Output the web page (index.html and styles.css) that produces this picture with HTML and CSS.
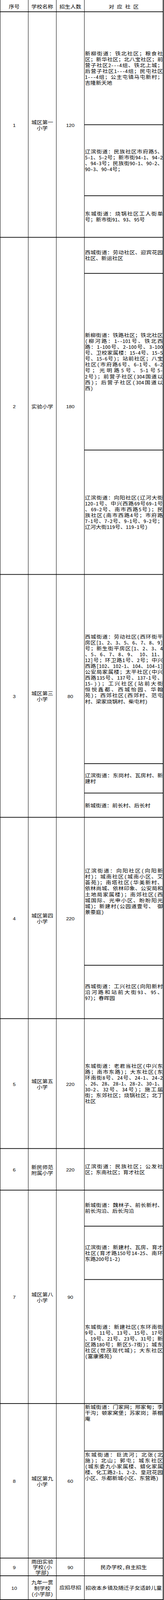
FILE: index.html
```html
<!DOCTYPE html>
<html lang="zh-CN">
<head>
<meta charset="utf-8">
<title>招生对应社区</title>
<link rel="stylesheet" href="styles.css">
</head>
<body>
<div class="page">
<div class="sheet">
  <div class="row head">
    <div class="c">序号</div>
    <div class="c">学校名称</div>
    <div class="c">招生人数</div>
    <div class="c">对　应　社　区</div>
  </div>

  <div class="row">
    <div class="c num">1</div>
    <div class="c name">城区第一小学</div>
    <div class="c num">120</div>
    <div class="areas">
      <div class="area h324"><p class="t"><span>新柳街道：铁北社区；粮食社</span><span>区；新华社区；北八宝社区；前</span><span>营子社区2---4组、铁北上城；</span><span>后营子社区1---4组；民屯社区</span><span>1---4组；公主屯镇马屯新村；</span><span>吉隆新天地</span></p></div>
      <div class="area h203"><p class="t"><span>辽滨街道：民族社区市府路5、</span><span>5-1、5-2号；新市街94-1、94-2</span><span>、94-3号；民族街90-1、90-2、</span><span>90-3、90-4号；</span></p></div>
      <div class="area h118"><p class="t"><span>东城街道：烧锅社区工人街单</span><span>号；新市街91、93、95号</span></p></div>
    </div>
  </div>

  <div class="row">
    <div class="c num">2</div>
    <div class="c name">实验小学</div>
    <div class="c num">180</div>
    <div class="areas">
      <div class="area h102"><p class="t"><span>西城街道：劳动社区、迎宾花园</span><span>社区、新运社区</span></p></div>
      <div class="area h508"><p class="t"><span>新柳街道：铁路社区；铁北社区</span><span>（柳河路：1--101号、铁北西</span><span>路：1-100号、2-100号、3-100</span><span>号、卫校家属楼：15-4号、15-5</span><span>号、15-6号）；站前社区；八宝</span><span>社区（市府路6号、6-1号、6-2</span><span>号；光明路5号、5-1号5-</span><span>2号）；前营子社区（304国道以</span><span>西）；后营子社区（304国道以</span><span>西）</span></p></div>
      <div class="area h357"><p class="t"><span>辽滨街道：向阳社区（辽河大街</span><span>120-1号、中兴西路69号69-1号</span><span>、69-2号、南市西路5号）；民</span><span>族社区（南市西路4号；市府路</span><span>7-1号、7-2号、9-1号、9-2号；</span><span>辽河大街119号、119-1号）</span></p></div>
    </div>
  </div>

  <div class="row">
    <div class="c num">3</div>
    <div class="c name">城区第三小学</div>
    <div class="c num">80</div>
    <div class="areas">
      <div class="area h544"><p class="t"><span>西城街道：劳动社区（西环街平</span><span>房区[1、2、3、5、6、7、8、9]</span><span>号；新生街平房区[1、2、3、4</span><span>、5、6、7、8、9、　10、11、</span><span>12]号；环卫路1号、2号；中兴</span><span>西路[102、102-1、104、104-1]</span><span>公安局家属楼；太平社区（中兴</span><span>西路135号、137号、137-1号、</span><span>15-））；工兴社区（站前大街</span><span>恒悦鑫都、西城怡园、华翰</span><span>苑）；西郊社区（西郊村、范屯</span><span>村、梁家烧锅村、柴屯村）</span></p></div>
      <div class="area h83"><p class="t"><span>辽滨街道：东岗村、瓦房村、新</span><span>建村</span></p></div>
      <div class="area h68"><p class="t"><span>新城街道：前长村、后长村</span></p></div>
    </div>
  </div>

  <div class="row">
    <div class="c num">4</div>
    <div class="c name">城区第四小学</div>
    <div class="c num">220</div>
    <div class="areas">
      <div class="area h425"><p class="t"><span>辽滨街道：向阳社区（向阳新</span><span>村）；城南社区(城南小区、艾</span><span>荟苑)；南塔社区（华美新村、</span><span>依林尚城、依林印象、公安局和</span><span>土地局家属楼）；南郊社区(西</span><span>城国际、光申小区、盼盼阳光</span><span>城)；新建村(公园道壹号、　御</span><span>景豪庭)</span></p></div>
      <div class="area h152"><p class="t"><span>西城街道：工兴社区（向阳新村</span><span>沿河路和站前大街93、95、</span><span>97）；春晖园</span></p></div>
    </div>
  </div>

  <div class="row">
    <div class="c num">5</div>
    <div class="c name">城区第五小学</div>
    <div class="c num">220</div>
    <div class="areas">
      <div class="area h373"><p class="t"><span>东城街道：老君当社区（中兴东</span><span>路；南市东路）；大东社区（东</span><span>环南街8号、24号、24-1、24-2</span><span>、26、28、28-1、28-2、30-1、</span><span>30-2、32号、34号）；施工届</span><span>街；东郊社区；烧锅社区；北丁</span><span>社区</span></p></div>
    </div>
  </div>

  <div class="row">
    <div class="c num">6</div>
    <div class="c name">新民师范附属小学</div>
    <div class="c num">220</div>
    <div class="areas">
      <div class="area h118"><p class="t"><span>辽滨街道：民族社区；公发社</span><span>区；东南社区；育才社区</span></p></div>
    </div>
  </div>

  <div class="row">
    <div class="c num">7</div>
    <div class="c name">城区第八小学</div>
    <div class="c num">90</div>
    <div class="areas">
      <div class="area h102"><p class="t"><span>新城街道：魏林子、前长新村、</span><span>前长沟沿、后长沟沿</span></p></div>
      <div class="area h152"><p class="t"><span>辽滨街道：新建村、瓦房、育才</span><span>社区（育才路150号14-25、南环</span><span>东路200号1-2）</span></p></div>
      <div class="area h356"><p class="t"><span>东城街道：新建社区（东环南街</span><span>9号、11号、13号、15号、17号</span><span>、19号、21号、23号、31号；新</span><span>区路180号；新区5-7街）；城东</span><span>社区（世茂现代城）；大东社区</span><span>（富康雅苑）</span></p></div>
    </div>
  </div>

  <div class="row">
    <div class="c num">8</div>
    <div class="c name">城区第九小学</div>
    <div class="c num">60</div>
    <div class="areas">
      <div class="area top h135"><p class="t"><span>新城街道：门家网；邢家甸；李</span><span>干沟；顿家窝堡；苏家岗；茶棚</span><span>庵</span></p></div>
      <div class="area top h307"><p class="t"><span>东城街道：巨流河；北张（北</span><span>施）；北山；郭屯；城东社区</span><span>（城东委九小家属楼、蜡化家属</span><span>楼、化工路2-1、2-2、皇冠花园</span><span>小区、乐都新城小区、东营路）</span></p></div>
    </div>
  </div>

  <div class="row">
    <div class="c num">9</div>
    <div class="c name tight">雨田实验学校（小学部）</div>
    <div class="c num">90</div>
    <div class="areas">
      <div class="area mid h49">民办学校，自主招生</div>
    </div>
  </div>

  <div class="row">
    <div class="c num">10</div>
    <div class="c name">九年一贯制学校（小学部）</div>
    <div class="c">应招尽招</div>
    <div class="areas">
      <div class="area mid h67">招收本乡镇及随迁子女适龄儿童</div>
    </div>
  </div>
</div>
</div>
</body>
</html>
```

FILE: styles.css
```css
html, body {
  margin: 0;
  padding: 0;
  background: #fff;
}

body {
  font-family: "Noto Sans CJK SC", "Noto Sans", sans-serif;
  font-size: 14px;
  line-height: 17px;
  color: #000;
  font-feature-settings: "hwid" 1;
  text-spacing-trim: space-all;
  text-autospace: no-autospace;
}

/* The capture window is 4096px tall and is stretched to 4618px,
   so the 4618px-tall sheet is drawn compressed into 4096px. */
.page {
  height: 4096px;
  overflow: hidden;
}

.sheet {
  width: 420px;
  box-sizing: border-box;
  padding: 0 2px 2px 1px;
  background: #000;
  display: flex;
  flex-direction: column;
  row-gap: 2px;
  transform: scaleY(0.886964);
  transform-origin: 0 0;
}

.row {
  display: grid;
  grid-template-columns: 71px 71px 71px 201px;
  column-gap: 1px;
}

.c {
  background: #fff;
  display: flex;
  align-items: center;
  justify-content: center;
  text-align: center;
  overflow: hidden;
  contain: size;
  box-sizing: border-box;
}

.head {
  height: 33px;
}

.head .c {
  padding-top: 5px;
}

.num {
  font-family: "Liberation Sans", Arial, sans-serif;
  font-size: 13px;
  font-feature-settings: normal;
  padding-top: 3px;
}

.name {
  padding: 3px 5px 0;
}

.name.tight {
  padding-top: 0;
  line-height: 16px;
}

.areas {
  display: flex;
  flex-direction: column;
  row-gap: 2px;
}

.area {
  background: #fff;
  display: flex;
  align-items: center;
  overflow: hidden;
  flex: none;
}

.area.top {
  align-items: flex-start;
  padding-top: 1px;
  box-sizing: border-box;
}

.area.mid {
  justify-content: center;
  text-align: center;
  padding-top: 2px;
  box-sizing: border-box;
}

.t {
  margin: 0;
  width: 100%;
  padding-left: 1px;
  box-sizing: border-box;
}

.t span {
  display: block;
  text-align: justify;
  text-align-last: justify;
}

.t span:last-child {
  text-align: left;
  text-align-last: auto;
}

.h49 { height: 49px; }
.h67 { height: 67px; }
.h68 { height: 68px; }
.h83 { height: 83px; }
.h102 { height: 102px; }
.h118 { height: 118px; }
.h135 { height: 135px; }
.h152 { height: 152px; }
.h203 { height: 203px; }
.h307 { height: 307px; }
.h324 { height: 324px; }
.h356 { height: 356px; }
.h357 { height: 357px; }
.h373 { height: 373px; }
.h425 { height: 425px; }
.h508 { height: 508px; }
.h544 { height: 544px; }
```
